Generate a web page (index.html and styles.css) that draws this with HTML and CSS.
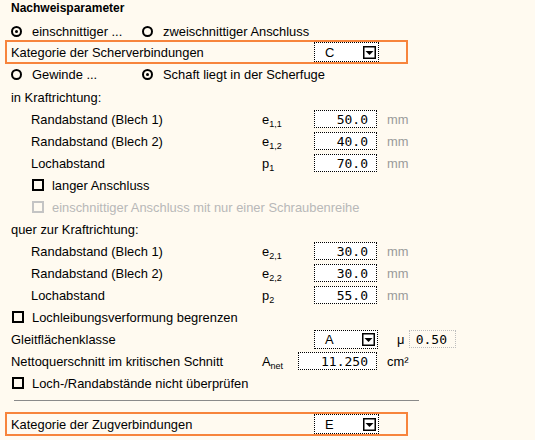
FILE: index.html
```html
<!DOCTYPE html>
<html lang="de">
<head>
<meta charset="utf-8">
<title>Nachweisparameter</title>
<link rel="stylesheet" href="styles.css">
</head>
<body>
<div class="panel">
  <div class="title">Nachweisparameter</div>

  <div class="row opts">
    <label class="opt first"><span class="radio on"></span>einschnittiger ...</label>
    <label class="opt"><span class="radio"></span>zweischnittiger Anschluss</label>
  </div>

  <div class="box">
    <span class="box-label">Kategorie der Scherverbindungen</span>
    <div class="select"><span class="sel-val">C</span>
      <svg class="arrow" width="13" height="13" viewBox="0 0 13 13"><rect x="0.75" y="0.75" width="11.5" height="11.5" fill="#fff" stroke="#000" stroke-width="1.5"/><path d="M2.5 5h8l-4 4z" fill="#000"/></svg>
    </div>
  </div>

  <div class="row opts">
    <label class="opt first"><span class="radio"></span>Gewinde ...</label>
    <label class="opt"><span class="radio on"></span>Schaft liegt in der Scherfuge</label>
  </div>

  <div class="row">in Kraftrichtung:</div>

  <div class="row mrow indent">
    <span class="lab">Randabstand (Blech 1)</span>
    <span class="sym">e<sub>1,1</sub></span>
    <span class="field">50.0</span>
    <span class="unit">mm</span>
  </div>
  <div class="row mrow indent">
    <span class="lab">Randabstand (Blech 2)</span>
    <span class="sym">e<sub>1,2</sub></span>
    <span class="field">40.0</span>
    <span class="unit">mm</span>
  </div>
  <div class="row mrow indent">
    <span class="lab">Lochabstand</span>
    <span class="sym">p<sub>1</sub></span>
    <span class="field">70.0</span>
    <span class="unit">mm</span>
  </div>

  <div class="row indent"><span class="check"></span>langer Anschluss</div>
  <div class="row indent disabled"><span class="check"></span>einschnittiger Anschluss mit nur einer Schraubenreihe</div>

  <div class="row">quer zur Kraftrichtung:</div>

  <div class="row mrow indent">
    <span class="lab">Randabstand (Blech 1)</span>
    <span class="sym">e<sub>2,1</sub></span>
    <span class="field">30.0</span>
    <span class="unit">mm</span>
  </div>
  <div class="row mrow indent">
    <span class="lab">Randabstand (Blech 2)</span>
    <span class="sym">e<sub>2,2</sub></span>
    <span class="field">30.0</span>
    <span class="unit">mm</span>
  </div>
  <div class="row mrow indent">
    <span class="lab">Lochabstand</span>
    <span class="sym">p<sub>2</sub></span>
    <span class="field">55.0</span>
    <span class="unit">mm</span>
  </div>

  <div class="row"><span class="check"></span>Lochleibungsverformung begrenzen</div>

  <div class="row gleit">
    <span class="glab">Gleitflächenklasse</span>
    <div class="select small"><span class="sel-val">A</span>
      <svg class="arrow" width="13" height="13" viewBox="0 0 13 13"><rect x="0.75" y="0.75" width="11.5" height="11.5" fill="#fff" stroke="#000" stroke-width="1.5"/><path d="M2.5 5h8l-4 4z" fill="#000"/></svg>
    </div>
    <span class="mu">μ</span>
    <span class="field off">0.50</span>
  </div>

  <div class="row netto">
    <span class="glab">Nettoquerschnitt im kritischen Schnitt</span>
    <span class="sym2">A<sub>net</sub></span>
    <span class="field wide">11.250</span>
    <span class="unit dark">cm²</span>
  </div>

  <div class="row"><span class="check"></span>Loch-/Randabstände nicht überprüfen</div>

  <div class="rule"></div>

  <div class="box box2">
    <span class="box-label">Kategorie der Zugverbindungen</span>
    <div class="select"><span class="sel-val">E</span>
      <svg class="arrow" width="13" height="13" viewBox="0 0 13 13"><rect x="0.75" y="0.75" width="11.5" height="11.5" fill="#fff" stroke="#000" stroke-width="1.5"/><path d="M2.5 5h8l-4 4z" fill="#000"/></svg>
    </div>
  </div>
</div>
</body>
</html>
```
FILE: styles.css
```css
html, body {
  margin: 0;
  padding: 0;
  background: #fffaf0;
}
body {
  font-family: "Liberation Sans", Arial, sans-serif;
  font-size: 12.9px;
  color: #000;
}
.panel {
  display: flex;
  flex-direction: column;
  width: 535px;
  height: 440px;
}
.title {
  height: 16px;
  line-height: 16px;
  padding-left: 11px;
  font-weight: bold;
  font-size: 12px;
}
.row {
  display: flex;
  align-items: center;
  height: 22px;
  padding-left: 11px;
  white-space: nowrap;
}
.row.opts {
  height: 20px;
  margin-top: 5px;
}
.row.opts + .box { margin-top: -1px; }
.box + .row.opts { margin-top: 0; }
.row.opts + .row { margin-top: 2px; }
.indent { padding-left: 31px; }
.opt {
  display: flex;
  align-items: center;
}
.opt.first { width: 131px; }
.radio {
  width: 11px;
  height: 11px;
  box-sizing: border-box;
  border: 2px solid #000;
  border-radius: 50%;
  margin-right: 10px;
  display: flex;
  align-items: center;
  justify-content: center;
}
.radio.on::after {
  content: "";
  width: 3px;
  height: 3px;
  background: #000;
  border-radius: 50%;
}
.check {
  width: 12px;
  height: 12px;
  box-sizing: border-box;
  border: 2px solid #000;
  margin-left: 1px;
  margin-right: 8px;
}
.disabled { color: #b8b8b8; }
.disabled .check { border-color: #c4c4c4; }
.box {
  display: flex;
  align-items: center;
  margin-left: 5px;
  width: 403px;
  height: 24px;
  box-sizing: border-box;
  border: 2px solid #f7843c;
  padding-left: 4px;
}
.box-label { width: 303px; }
.select {
  display: flex;
  align-items: center;
  width: 65px;
  height: 20px;
  box-sizing: border-box;
  border: 1px dotted #000;
  background: #fff;
  padding-left: 10px;
  padding-right: 2px;
}
.select.small { width: 64px; height: 19px; }
.sel-val { flex: 1; }
.arrow { display: block; }
.mrow .lab { width: 231px; }
.sym { width: 52px; }
.sym sub, .sym2 sub {
  font-size: 9px;
  vertical-align: -3px;
  line-height: 0;
}
.field {
  display: flex;
  align-items: center;
  justify-content: flex-end;
  width: 63px;
  height: 18px;
  box-sizing: border-box;
  border: 1px dotted #000;
  background: #fff;
  padding-right: 8px;
  font-family: "DejaVu Sans Mono", "Liberation Mono", monospace;
  font-size: 13px;
}
.unit {
  margin-left: 10px;
  color: #9a9a9a;
}
.unit.dark { color: #000; }
.glab { width: 303px; }
.netto .glab { width: 251px; }
.sym2 { width: 36px; }
.field.wide { width: 79px; }
.mu { margin-left: 19px; width: 12px; }
.field.off {
  width: 47px;
  background: transparent;
  border-color: #bdbdbd;
}
.rule {
  margin: 6px 0 0 14px;
  width: 405px;
  height: 1px;
  background: #8a8a8a;
}
.box2 { margin-top: 11px; }
```
